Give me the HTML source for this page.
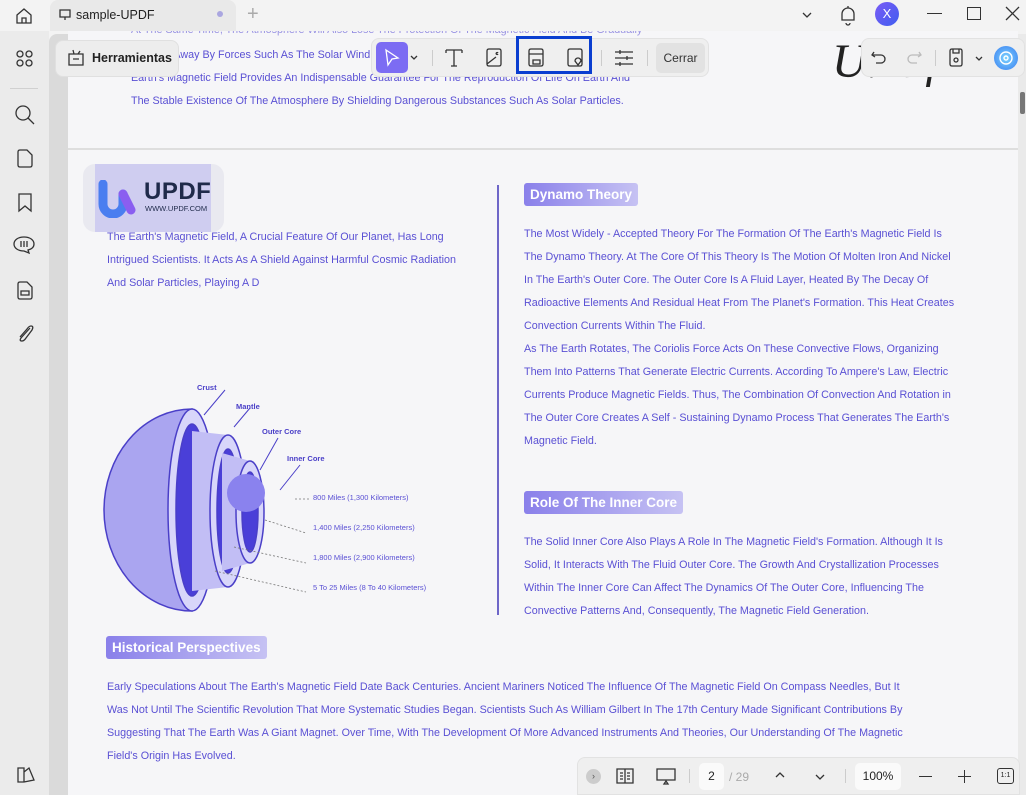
<!DOCTYPE html>
<html><head><meta charset="utf-8"><style>
*{margin:0;padding:0;box-sizing:border-box}
body{width:1026px;height:795px;overflow:hidden;background:#f3f3f3;font-family:"Liberation Sans",Arial,sans-serif;position:relative}
.a{position:absolute}
.t{position:absolute;color:#5a50d4;font-size:10.75px;white-space:nowrap}
.h{position:absolute;color:#fff;font-weight:bold;font-size:13.5px;padding:4px 6px;border-radius:3px;background:linear-gradient(90deg,#8a80ea,#c6c2f3)}
svg{position:absolute}
.ic{stroke:#333;fill:none;stroke-width:1.3}
</style></head><body>
<!-- page area -->
<div class="a" style="left:68px;top:20px;width:950px;height:775px;background:#f6f6f8"></div>
<div class="a" style="left:68px;top:148px;width:950px;height:2px;background:#dedede"></div>
<div class="a" style="left:1018px;top:34px;width:8px;height:761px;background:#eaeaea"></div>
<div class="a" style="left:1020px;top:92px;width:5px;height:22px;background:#777;border-radius:2px"></div>
<div class="t" style="left:131px;top:24px;opacity:.6">At The Same Time, The Atmosphere Will Also Lose The Protection Of The Magnetic Field And Be Gradually</div>
<!-- top bar -->
<div class="a" style="left:0;top:0;width:1026px;height:31px;background:#f3f3f3"></div>
<svg style="left:14px;top:6px" width="20" height="20" viewBox="0 0 20 20"><path class="ic" d="M3 9 L10 3 L17 9 V17 H3 Z M8 17 V12 H12 V17"/></svg>
<div class="a" style="left:50px;top:0;width:186px;height:31px;background:#e9e9e9;border-radius:8px 8px 0 0"></div>
<svg style="left:59px;top:9px" width="12" height="12" viewBox="0 0 12 12"><path class="ic" d="M1 1H11V8H1Z M6 8V11"/></svg>
<div class="a" style="left:76px;top:8px;font-size:12.5px;color:#222">sample-UPDF</div>
<div class="a" style="left:217px;top:11px;width:6px;height:6px;border-radius:3px;background:#aaa6e0"></div>
<div class="a" style="left:247px;top:3px;font-size:20px;color:#aaa;font-weight:200">+</div>
<svg style="left:800px;top:8px" width="14" height="14" viewBox="0 0 14 14"><path class="ic" d="M3 5L7 9L11 5"/></svg>
<svg style="left:838px;top:5px" width="20" height="22" viewBox="0 0 20 22"><path class="ic" d="M4 15V9A6 6 0 0 1 16 9V15H4Z M8 18A2 2 0 0 0 12 18 M10 1V3"/></svg>
<div class="a" style="left:875px;top:2px;width:24px;height:24px;border-radius:12px;background:linear-gradient(135deg,#7a5cf5,#3f5df0);color:#fff;font-size:13px;text-align:center;line-height:24px">X</div>
<div class="a" style="left:927px;top:13px;width:15px;height:1px;background:#333"></div>
<div class="a" style="left:967px;top:7px;width:14px;height:13px;border:1.3px solid #333"></div>
<svg style="left:1005px;top:6px" width="15" height="15" viewBox="0 0 15 15"><path class="ic" d="M1 1L14 14M14 1L1 14"/></svg>
<!-- left sidebar -->
<div class="a" style="left:0;top:31px;width:49px;height:764px;background:#ebebeb"></div>
<div class="a" style="left:49px;top:34px;width:19px;height:761px;background:#dadada;border-radius:8px 0 0 0"></div>
<svg style="left:15px;top:49px" width="20" height="20" viewBox="0 0 20 20"><g class="ic"><circle cx="5" cy="5" r="3"/><circle cx="14" cy="5" r="3"/><circle cx="5" cy="14" r="3"/><circle cx="14" cy="14" r="3"/></g></svg>
<div class="a" style="left:10px;top:88px;width:28px;height:1px;background:#d0d0d0"></div>
<svg style="left:14px;top:104px" width="22" height="22" viewBox="0 0 22 22"><path class="ic" d="M9 2A7 7 0 1 0 9 16A7 7 0 1 0 9 2M14 14L20 20"/></svg>
<svg style="left:15px;top:148px" width="20" height="22" viewBox="0 0 20 22"><path class="ic" d="M3 4Q3 2 5 2H12L17 7V17Q17 19 15 19H5Q3 19 3 17Z"/></svg>
<svg style="left:15px;top:192px" width="20" height="22" viewBox="0 0 20 22"><path class="ic" d="M4 2H16V19L10 14L4 19Z"/></svg>
<svg style="left:12px;top:234px" width="24" height="22" viewBox="0 0 24 22"><path class="ic" d="M12 3C6 3 2 6 2 10C2 14 6 17 12 17L17 19L16 16C20 15 22 13 22 10C22 6 18 3 12 3ZM9 7V13M12 7V13M15 7V13"/></svg>
<svg style="left:15px;top:280px" width="20" height="22" viewBox="0 0 20 22"><path class="ic" d="M3 4Q3 2 5 2H12L17 7V17Q17 19 15 19H5Q3 19 3 17Z M6 11H14V15H6Z"/></svg>
<svg style="left:14px;top:323px" width="22" height="22" viewBox="0 0 22 22"><path class="ic" d="M16 5L7 15Q5 18 8 18Q10 18 12 15L18 7Q20 3 17 3Q15 3 13 6L6 14"/></svg>
<svg style="left:15px;top:765px" width="22" height="20" viewBox="0 0 22 20"><path class="ic" d="M3 3H9V17H3ZM9 7L14 3L19 15L9 17"/></svg>
<!-- top page text -->
<div class="t" style="left:131px;top:49px">Stripped Away By Forces Such As The Solar Wind</div>
<div class="t" style="left:131px;top:72px">Earth's Magnetic Field Provides An Indispensable Guarantee For The Reproduction Of Life On Earth And</div>
<div class="t" style="left:131px;top:95px">The Stable Existence Of The Atmosphere By Shielding Dangerous Substances Such As Solar Particles.</div>
<div class="a" style="left:832px;top:34px;font-family:'Liberation Serif',serif;font-style:italic;font-size:48px;color:#222">U. Uf</div>
<!-- toolbar -->
<div class="a" style="left:55px;top:40px;width:124px;height:37px;background:#ededed;border-radius:8px;border:1px solid #e0e0e0"></div>
<svg style="left:66px;top:48px" width="20" height="20" viewBox="0 0 20 20"><path class="ic" d="M3 6H17V17H3Z M7 11H13 M8 6L7 2 M12 6L14 3"/></svg>
<div class="a" style="left:92px;top:51px;font-size:12.5px;font-weight:bold;color:#222">Herramientas</div>
<div class="a" style="left:371px;top:38px;width:338px;height:39px;background:#efefef;border-radius:8px;border:1px solid #e2e2e2"></div>
<div class="a" style="left:376px;top:42px;width:32px;height:31px;background:#7c6cf3;border-radius:5px"></div>
<svg style="left:383px;top:48px" width="18" height="20" viewBox="0 0 18 20"><path d="M3 2L15 10L9 11L5 17Z" stroke="#fff" fill="none" stroke-width="1.3"/></svg>
<svg style="left:409px;top:52px" width="10" height="10" viewBox="0 0 10 10"><path class="ic" d="M2 4L5 7L8 4"/></svg>
<div class="a" style="left:432px;top:50px;width:1px;height:16px;background:#ccc"></div>
<svg style="left:444px;top:47px" width="20" height="22" viewBox="0 0 20 22"><path class="ic" d="M2 3H18M10 3V19M7 19H13M2 3V6M18 3V6"/></svg>
<svg style="left:484px;top:47px" width="20" height="22" viewBox="0 0 20 22"><path class="ic" d="M3 4Q3 2 5 2H15Q17 2 17 4V17Q17 19 15 19H5Q3 19 3 17Z M3 17L12 10 M14 6A1 1 0 1 0 14 7"/></svg>
<div class="a" style="left:516px;top:36px;width:76px;height:38px;border:3px solid #0a3ed0"></div>
<svg style="left:526px;top:47px" width="20" height="22" viewBox="0 0 20 22"><path class="ic" d="M3 4Q3 2 5 2H15Q17 2 17 4V17Q17 19 15 19H5Q3 19 3 17Z M3 7H17 M7 13H14V17H7Z"/></svg>
<svg style="left:565px;top:47px" width="20" height="22" viewBox="0 0 20 22"><path class="ic" d="M3 4Q3 2 5 2H15Q17 2 17 4V17Q17 19 15 19H5Q3 19 3 17Z M13 18L10 14A3 3 0 1 1 16 14Z"/></svg>
<div class="a" style="left:601px;top:50px;width:1px;height:16px;background:#ccc"></div>
<svg style="left:613px;top:47px" width="22" height="22" viewBox="0 0 22 22"><path class="ic" d="M2 5H20M2 11H20M2 17H20M7 3V7M14 9V13M7 15V19"/></svg>
<div class="a" style="left:647px;top:50px;width:1px;height:16px;background:#ccc"></div>
<div class="a" style="left:656px;top:43px;width:49px;height:30px;background:#e2e2e2;border-radius:5px;font-size:12px;color:#333;text-align:center;line-height:30px">Cerrar</div>
<div class="a" style="left:861px;top:38px;width:164px;height:39px;background:#efefef;border-radius:8px;border:1px solid #e2e2e2"></div>
<svg style="left:871px;top:50px" width="16" height="14" viewBox="0 0 16 14"><path class="ic" d="M3 2L1 5L4 7M1 5H10A4 4 0 0 1 10 13H5"/></svg>
<svg style="left:906px;top:50px" width="16" height="14" viewBox="0 0 16 14"><path d="M13 2L15 5L12 7M15 5H6A4 4 0 0 0 6 13H11" stroke="#bbb" fill="none" stroke-width="1.3"/></svg>
<div class="a" style="left:935px;top:50px;width:1px;height:16px;background:#ccc"></div>
<svg style="left:946px;top:47px" width="20" height="22" viewBox="0 0 20 22"><path class="ic" d="M4 4Q4 2 6 2H14Q16 2 16 4V17Q16 19 14 19H6Q4 19 4 17Z M7 2V6H13V2 M10 11A2 2 0 1 0 10 15A2 2 0 1 0 10 11"/></svg>
<svg style="left:974px;top:53px" width="10" height="10" viewBox="0 0 10 10"><path class="ic" d="M2 4L5 7L8 4"/></svg>
<div class="a" style="left:994px;top:46px;width:24px;height:24px;border-radius:12px;background:radial-gradient(circle,#7dd3ff,#3a7ef0)"></div>
<svg style="left:997px;top:49px" width="18" height="18" viewBox="0 0 18 18"><path d="M9 3A6 6 0 1 0 9 15A6 6 0 1 0 9 3M9 7A2 2 0 1 0 9 11A2 2 0 1 0 9 7" stroke="#fff" fill="none" stroke-width="1.4"/></svg>
<!-- logo watermark -->
<div class="a" style="left:83px;top:164px;width:141px;height:68px;background:#e9e9f0;border-radius:12px"></div>
<div class="a" style="left:95px;top:164px;width:116px;height:68px;background:#cfcdf0"></div>
<svg style="left:97px;top:180px" width="40" height="38" viewBox="0 0 40 38"><path d="M6 4V24A10 10 0 0 0 26 24V14" stroke="#4a7ef0" stroke-width="9" fill="none" stroke-linecap="round"/><path d="M26 14L34 30" stroke="#8a5ef0" stroke-width="9" stroke-linecap="round"/></svg>
<div class="a" style="left:144px;top:178px;font-size:24px;font-weight:bold;color:#1f2a4a;letter-spacing:0.5px">UPDF</div>
<div class="a" style="left:145px;top:204px;font-size:7.5px;color:#1f2a4a">WWW.UPDF.COM</div>
<!-- left col text -->
<div class="t" style="left:107px;top:231px">The Earth's Magnetic Field, A Crucial Feature Of Our Planet, Has Long</div>
<div class="t" style="left:107px;top:254px">Intrigued Scientists. It Acts As A Shield Against Harmful Cosmic Radiation</div>
<div class="t" style="left:107px;top:277px">And Solar Particles, Playing A D</div>
<!-- diagram -->
<svg style="left:100px;top:375px" width="340" height="240" viewBox="0 0 340 240">
<g stroke="#4a3fc8" stroke-width="1.5">
<path d="M92 34 A88 101 0 0 0 92 236 Z" fill="#aaa5f0"/>
<ellipse cx="92" cy="135" rx="24" ry="101" fill="#d8d6fa"/>
<ellipse cx="92" cy="135" rx="16" ry="86" fill="#4a3fd8"/>
<path d="M128 60 L92 56 V216 L128 212 Z" fill="#c2bef5" stroke="none"/>
<ellipse cx="128" cy="136" rx="18" ry="76" fill="#d8d6fa"/>
<ellipse cx="128" cy="136" rx="11" ry="62" fill="#4a3fd8"/>
<path d="M150 86 L122 78 V196 L150 188 Z" fill="#c2bef5" stroke="none"/>
<ellipse cx="150" cy="137" rx="14" ry="51" fill="#d8d6fa"/>
<ellipse cx="150" cy="137" rx="8" ry="40" fill="#4a3fd8"/>
</g>
<circle cx="146" cy="118" r="19" fill="#8a82ee"/>
<g stroke="#4a3fc8" stroke-width="1"><path d="M104 40L125 15M134 52L150 33M160 95L178 63M180 115L200 90"/></g>
<g stroke="#777" stroke-width="0.8" stroke-dasharray="2,2"><path d="M195 124H210M165 145L206 158M134 172L206 188M115 196L206 217"/></g>
<g font-size="7.5" fill="#4a3fc8" font-weight="bold"><text x="97" y="15">Crust</text><text x="136" y="34">Mantle</text><text x="162" y="59">Outer Core</text><text x="187" y="86">Inner Core</text></g>
<g font-size="7.5" fill="#5a50d4"><text x="213" y="125">800 Miles (1,300 Kilometers)</text><text x="213" y="155">1,400 Miles (2,250 Kilometers)</text><text x="213" y="185">1,800 Miles (2,900 Kilometers)</text><text x="213" y="215">5 To 25 Miles (8 To 40 Kilometers)</text></g>
</svg>
<div class="a" style="left:497px;top:185px;width:2px;height:430px;background:#6e66c8"></div>
<!-- right col -->
<div class="h" style="left:524px;top:183px">Dynamo Theory</div>
<div class="t" style="left:524px;top:228px">The Most Widely - Accepted Theory For The Formation Of The Earth's Magnetic Field Is</div>
<div class="t" style="left:524px;top:251px">The Dynamo Theory. At The Core Of This Theory Is The Motion Of Molten Iron And Nickel</div>
<div class="t" style="left:524px;top:274px">In The Earth's Outer Core. The Outer Core Is A Fluid Layer, Heated By The Decay Of</div>
<div class="t" style="left:524px;top:297px">Radioactive Elements And Residual Heat From The Planet's Formation. This Heat Creates</div>
<div class="t" style="left:524px;top:320px">Convection Currents Within The Fluid.</div>
<div class="t" style="left:524px;top:343px">As The Earth Rotates, The Coriolis Force Acts On These Convective Flows, Organizing</div>
<div class="t" style="left:524px;top:366px">Them Into Patterns That Generate Electric Currents. According To Ampere's Law, Electric</div>
<div class="t" style="left:524px;top:389px">Currents Produce Magnetic Fields. Thus, The Combination Of Convection And Rotation in</div>
<div class="t" style="left:524px;top:412px">The Outer Core Creates A Self - Sustaining Dynamo Process That Generates The Earth's</div>
<div class="t" style="left:524px;top:435px">Magnetic Field.</div>
<div class="h" style="left:524px;top:491px">Role Of The Inner Core</div>
<div class="t" style="left:524px;top:536px">The Solid Inner Core Also Plays A Role In The Magnetic Field's Formation. Although It Is</div>
<div class="t" style="left:524px;top:559px">Solid, It Interacts With The Fluid Outer Core. The Growth And Crystallization Processes</div>
<div class="t" style="left:524px;top:582px">Within The Inner Core Can Affect The Dynamics Of The Outer Core, Influencing The</div>
<div class="t" style="left:524px;top:605px">Convective Patterns And, Consequently, The Magnetic Field Generation.</div>
<!-- bottom -->
<div class="h" style="left:106px;top:636px">Historical Perspectives</div>
<div class="t" style="left:107px;top:681px">Early Speculations About The Earth's Magnetic Field Date Back Centuries. Ancient Mariners Noticed The Influence Of The Magnetic Field On Compass Needles, But It</div>
<div class="t" style="left:107px;top:704px">Was Not Until The Scientific Revolution That More Systematic Studies Began. Scientists Such As William Gilbert In The 17th Century Made Significant Contributions By</div>
<div class="t" style="left:107px;top:727px">Suggesting That The Earth Was A Giant Magnet. Over Time, With The Development Of More Advanced Instruments And Theories, Our Understanding Of The Magnetic</div>
<div class="t" style="left:107px;top:750px">Field's Origin Has Evolved.</div>
<!-- bottom bar -->
<div class="a" style="left:577px;top:757px;width:443px;height:38px;background:#efefef;border-radius:8px 8px 0 0;border:1px solid #e2e2e2"></div>
<div class="a" style="left:586px;top:769px;width:15px;height:15px;border-radius:8px;background:#ccc;font-size:9px;text-align:center;line-height:15px;color:#555">›</div>
<svg style="left:615px;top:767px" width="20" height="18" viewBox="0 0 20 18"><path class="ic" d="M2 2H18V16H2ZM10 2V16M5 6H8M5 9H8M5 12H8M12 6H15M12 9H15M12 12H15"/></svg>
<svg style="left:654px;top:767px" width="24" height="18" viewBox="0 0 24 18"><path class="ic" d="M3 2H21V13H3ZM10 17L12 14L14 17Z"/></svg>
<div class="a" style="left:689px;top:769px;width:1px;height:14px;background:#ccc"></div>
<div class="a" style="left:699px;top:763px;width:25px;height:27px;background:#fafafa;border-radius:5px;font-size:12px;text-align:center;line-height:27px;color:#222">2</div>
<div class="a" style="left:729px;top:770px;font-size:12px;color:#aaa">/ 29</div>
<svg style="left:774px;top:770px" width="12" height="10" viewBox="0 0 12 10"><path class="ic" d="M2 7L6 3L10 7"/></svg>
<svg style="left:814px;top:772px" width="12" height="10" viewBox="0 0 12 10"><path class="ic" d="M2 3L6 7L10 3"/></svg>
<div class="a" style="left:845px;top:769px;width:1px;height:14px;background:#ccc"></div>
<div class="a" style="left:855px;top:763px;width:46px;height:27px;background:#fafafa;border-radius:5px;font-size:12px;text-align:center;line-height:27px;color:#222">100%</div>
<div class="a" style="left:919px;top:776px;width:13px;height:1px;background:#333"></div>
<div class="a" style="left:958px;top:776px;width:13px;height:1px;background:#333"></div>
<div class="a" style="left:964px;top:770px;width:1px;height:13px;background:#333"></div>
<div class="a" style="left:997px;top:768px;width:17px;height:16px;border:1.2px solid #333;border-radius:3px;font-size:7px;text-align:center;line-height:14px;color:#222">1:1</div>
</body></html>
